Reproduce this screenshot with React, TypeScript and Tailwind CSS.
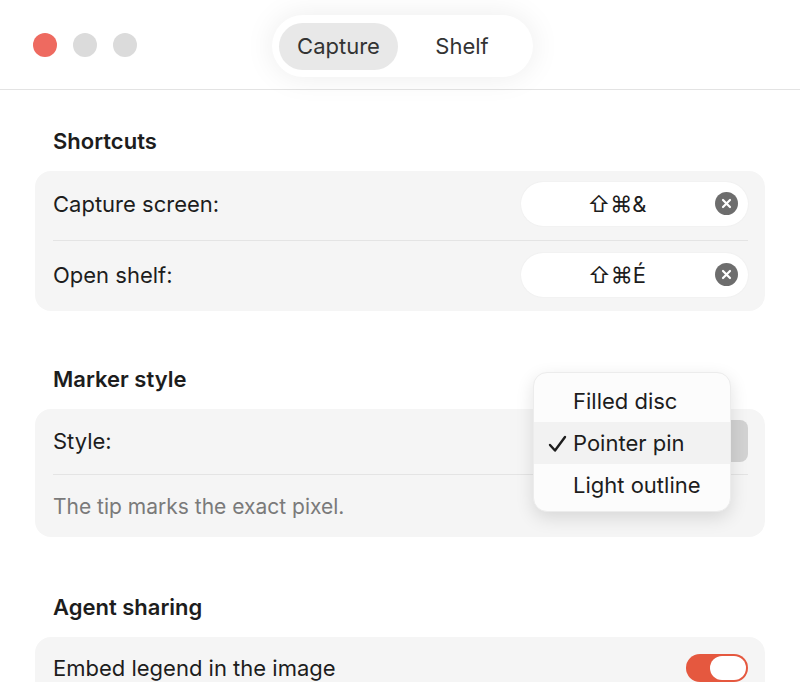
import { ReactNode } from "react";

const font = { fontFamily: "Inter, 'Noto Sans', 'DejaVu Sans', sans-serif" };

function TrafficLights() {
  return (
    <div className="flex items-center gap-4">
      <span className="w-6 h-6 rounded-full bg-[#ee6a60]" />
      <span className="w-6 h-6 rounded-full bg-[#dbdbdb]" />
      <span className="w-6 h-6 rounded-full bg-[#dbdbdb]" />
    </div>
  );
}

function Tabs() {
  return (
    <div className="flex items-center h-[62px] px-[7px] rounded-full bg-white shadow-[0_0_30px_rgba(0,0,0,0.08)]">
      <div className="h-[47px] w-[119px] rounded-full bg-[#e8e8e8] flex items-center justify-center text-[22px] leading-none text-[#333]">
        Capture
      </div>
      <div className="h-[47px] w-[128px] flex items-center justify-center text-[22px] leading-none text-[#333]">
        Shelf
      </div>
    </div>
  );
}

function Section({
  title,
  className = "",
  children,
}: {
  title: string;
  className?: string;
  children: ReactNode;
}) {
  return (
    <section className={className}>
      <h2 className="pl-[18px] h-[24px] leading-[26px] text-[22px] font-semibold text-[#1d1d1d] mb-[19px]">
        {title}
      </h2>
      <div className="rounded-[16px] bg-[#f5f5f5] px-[18px] pr-[17px]">
        {children}
      </div>
    </section>
  );
}

function ShortcutField({ keys }: { keys: string }) {
  return (
    <div className="relative w-[227px] h-[44px] rounded-full bg-white shadow-[0_0_2px_rgba(0,0,0,0.06)] flex items-center">
      <span className="w-[192px] text-center text-[22px] leading-none text-[#1d1d1d]">
        {keys}
      </span>
      <span className="absolute right-[10px] top-[10px] w-[23px] h-[23px] rounded-full bg-[#6d6d6d] flex items-center justify-center">
        <svg width="11" height="11" viewBox="0 0 11 11">
          <path
            d="M2 2 L9 9 M9 2 L2 9"
            stroke="white"
            strokeWidth="2.2"
            strokeLinecap="round"
          />
        </svg>
      </span>
    </div>
  );
}

function MarkerMenu() {
  const items = ["Filled disc", "Pointer pin", "Light outline"];
  return (
    <div className="absolute right-[17px] top-[-37px] w-[198px] pt-[7px] pb-[5px] rounded-[14px] bg-[#fcfcfc] border border-[#ececec] shadow-[0_6px_18px_rgba(0,0,0,0.12)]">
      {items.map((item) => {
        const selected = item === "Pointer pin";
        return (
          <div
            key={item}
            className={`relative h-[42px] flex items-center pl-[39px] text-[22px] leading-none text-[#1d1d1d] ${
              selected ? "bg-[#f2f2f2]" : ""
            }`}
          >
            {selected && (
              <svg
                className="absolute left-[14px] top-[13px]"
                width="19"
                height="18"
                viewBox="0 0 19 18"
              >
                <path
                  d="M2 10 L7 15.5 L17 2"
                  fill="none"
                  stroke="#1d1d1d"
                  strokeWidth="2.4"
                  strokeLinecap="round"
                  strokeLinejoin="round"
                />
              </svg>
            )}
            {item}
          </div>
        );
      })}
    </div>
  );
}

export default function App() {
  return (
    <div
      className="w-[800px] h-[682px] overflow-hidden bg-white text-[#1d1d1d]"
      style={font}
    >
      <header className="relative h-[90px] border-b border-[#e3e3e3] flex items-start">
        <div className="pl-[33px] pt-[33px]">
          <TrafficLights />
        </div>
        <div className="absolute left-[272px] top-[15px]">
          <Tabs />
        </div>
      </header>

      <main className="px-[35px] pt-[38px] flex flex-col">
        <Section title="Shortcuts">
          <div className="h-[70px] pb-[3px] flex items-center justify-between border-b border-[#e4e4e4]">
            <span className="text-[22px] leading-none">Capture screen:</span>
            <ShortcutField keys="⇧⌘&" />
          </div>
          <div className="h-[70px] pb-[3px] flex items-center justify-between">
            <span className="text-[22px] leading-none">Open shelf:</span>
            <ShortcutField keys="⇧⌘É" />
          </div>
        </Section>

        <Section title="Marker style" className="mt-[55px]">
          <div className="relative h-[66px] pb-[2px] flex items-center justify-between border-b border-[#e4e4e4]">
            <span className="text-[22px] leading-none">Style:</span>
            <div className="w-[200px] h-[42px] rounded-[8px] bg-[#d2d2d2]" />
            <MarkerMenu />
          </div>
          <div className="h-[62px] flex items-center">
            <span className="text-[21px] leading-none text-[#7a7a7a]">
              The tip marks the exact pixel.
            </span>
          </div>
        </Section>

        <Section title="Agent sharing" className="mt-[57px]">
          <div className="h-[62px] flex items-center justify-between">
            <span className="text-[22px] leading-none">
              Embed legend in the image
            </span>
            <div className="w-[62px] h-[28px] rounded-full bg-[#e5583f] p-[2px] flex justify-end">
              <span className="w-[36px] h-[24px] rounded-full bg-white" />
            </div>
          </div>
        </Section>
      </main>
    </div>
  );
}
